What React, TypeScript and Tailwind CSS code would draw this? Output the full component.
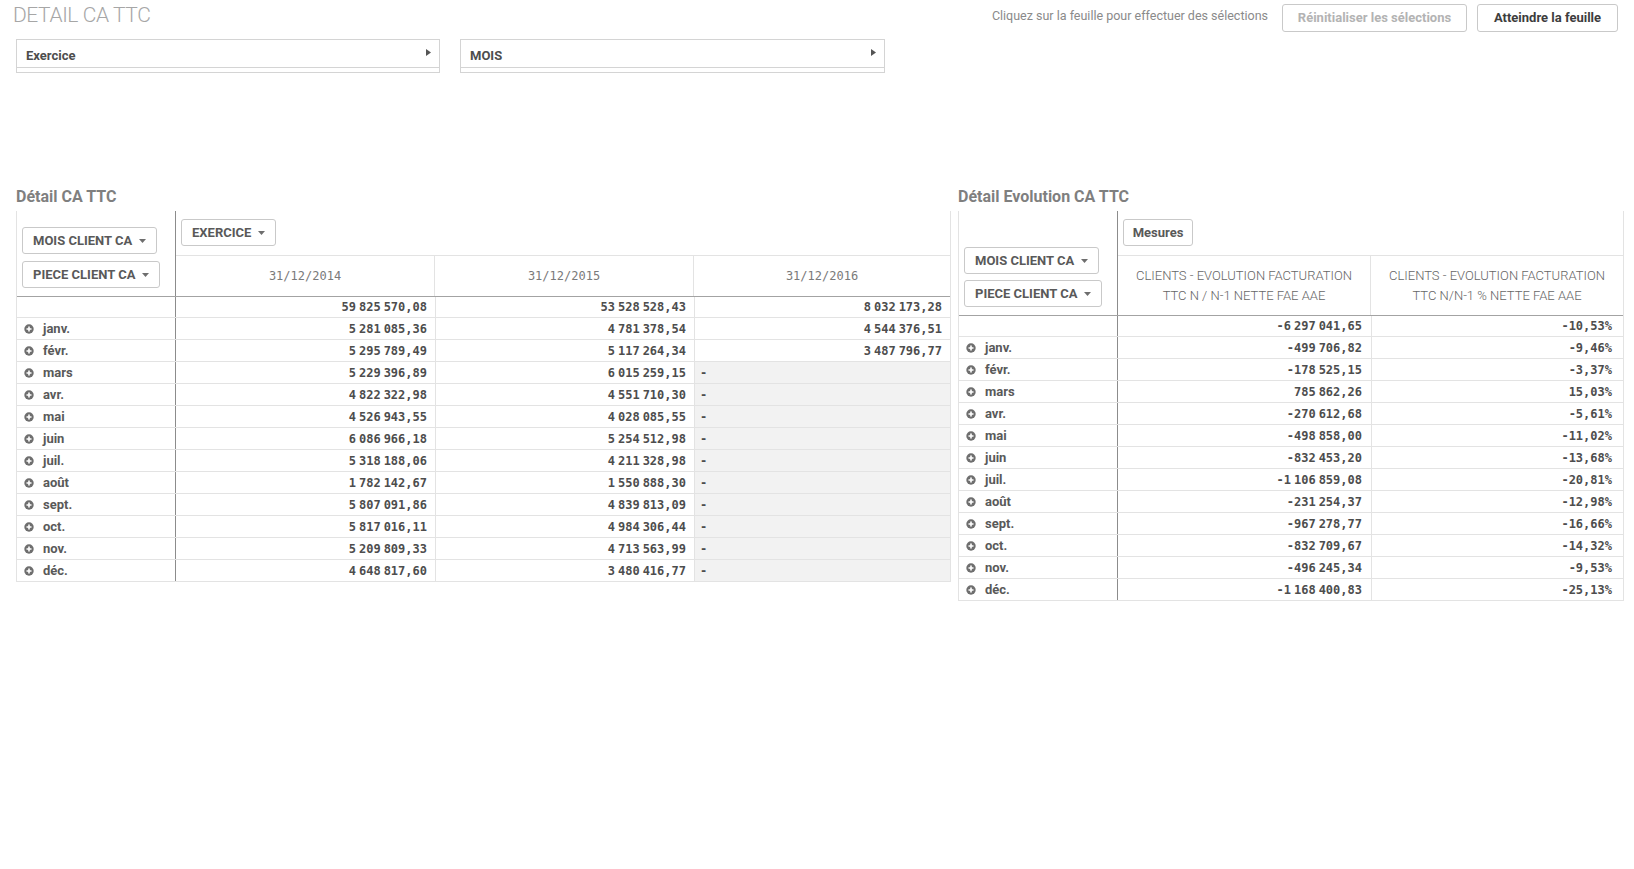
import React from "react";

const sans = "font-['Roboto','Liberation_Sans',sans-serif]";
const mono = "font-['DejaVu_Sans_Mono','Liberation_Mono',monospace]";

const months = ["janv.", "févr.", "mars", "avr.", "mai", "juin", "juil.", "août", "sept.", "oct.", "nov.", "déc."];

const caRows: [string, string, string | null][] = [
  ["5 281 085,36", "4 781 378,54", "4 544 376,51"],
  ["5 295 789,49", "5 117 264,34", "3 487 796,77"],
  ["5 229 396,89", "6 015 259,15", null],
  ["4 822 322,98", "4 551 710,30", null],
  ["4 526 943,55", "4 028 085,55", null],
  ["6 086 966,18", "5 254 512,98", null],
  ["5 318 188,06", "4 211 328,98", null],
  ["1 782 142,67", "1 550 888,30", null],
  ["5 807 091,86", "4 839 813,09", null],
  ["5 817 016,11", "4 984 306,44", null],
  ["5 209 809,33", "4 713 563,99", null],
  ["4 648 817,60", "3 480 416,77", null],
];

const evoRows: [string, string][] = [
  ["-499 706,82", "-9,46%"],
  ["-178 525,15", "-3,37%"],
  ["785 862,26", "15,03%"],
  ["-270 612,68", "-5,61%"],
  ["-498 858,00", "-11,02%"],
  ["-832 453,20", "-13,68%"],
  ["-1 106 859,08", "-20,81%"],
  ["-231 254,37", "-12,98%"],
  ["-967 278,77", "-16,66%"],
  ["-832 709,67", "-14,32%"],
  ["-496 245,34", "-9,53%"],
  ["-1 168 400,83", "-25,13%"],
];

// numbers use a narrow group separator, like the Qlik number format
function Num({ v }: { v: string }) {
  const parts = v.split(" ");
  return (
    <span className="whitespace-nowrap">
      {parts.map((p, i) => (
        <React.Fragment key={i}>
          {i > 0 && <span className="inline-block w-[3px]" />}
          {p}
        </React.Fragment>
      ))}
    </span>
  );
}

function PlusIcon() {
  return (
    <svg width="10" height="10" viewBox="0 0 10 10" className="shrink-0">
      <circle cx="5" cy="5" r="4.7" fill="#6e6e6e" />
      <path d="M5 2.5v5M2.5 5h5" stroke="#fff" strokeWidth="1.6" />
    </svg>
  );
}

function Caret() {
  return (
    <svg width="7" height="4" viewBox="0 0 7 4" className="ml-[7px]">
      <path d="M0 0h7L3.5 4z" fill="#6e6e6e" />
    </svg>
  );
}

function DimButton({ label }: { label: string }) {
  return (
    <div className="h-[27px] w-fit inline-flex items-center px-[10px] border border-[#c9c9c9] rounded-[3px] bg-white text-[13px] font-bold text-[#595959]">
      {label}
      <Caret />
    </div>
  );
}

function FilterBox({ label, w }: { label: string; w: string }) {
  return (
    <div className={`${w} h-[34px] border border-[#d4d4d4] flex flex-col`}>
      <div className="h-[28px] border-b border-[#d4d4d4] flex items-center justify-between pl-[9px] pr-[8px] pt-[4px]">
        <span className="text-[13px] font-bold text-[#4d4d4d]">{label}</span>
        <svg width="5" height="7" viewBox="0 0 5 7" className="-mt-[7px]">
          <path d="M0 0l5 3.5L0 7z" fill="#555" />
        </svg>
      </div>
    </div>
  );
}

function RowLabel({ name }: { name: string }) {
  return (
    <div className="flex items-center pl-[7px] gap-[9px] border-r border-[#8c8c8c] h-full">
      <PlusIcon />
      <span className="text-[13px] font-bold text-[#595959]">{name}</span>
    </div>
  );
}

const numCell = `flex items-center justify-end ${mono} text-[12px] font-bold text-[#4d4d4d]`;

function CaTable() {
  return (
    <div className="w-[935px] border-x border-[#e3e3e3]">
      {/* header */}
      <div className="flex h-[86px] border-b border-[#a3a3a3]">
        <div className="w-[159px] border-r border-[#8c8c8c] flex flex-col justify-end items-start gap-[7px] pl-[5px] pb-[8px]">
          <DimButton label="MOIS CLIENT CA" />
          <DimButton label="PIECE CLIENT CA" />
        </div>
        <div className="flex-1 flex flex-col">
          <div className="h-[44px] pt-[8px] pl-[5px]">
            <DimButton label="EXERCICE" />
          </div>
          <div className="flex-1 grid grid-cols-[259px_259px_1fr] border-t border-[#e3e3e3]">
            {["31/12/2014", "31/12/2015", "31/12/2016"].map((d, i) => (
              <div
                key={d}
                className={`flex items-center justify-center ${mono} text-[12px] text-[#7a7a7a] ${i < 2 ? "border-r border-[#e3e3e3]" : ""}`}
              >
                {d}
              </div>
            ))}
          </div>
        </div>
      </div>
      {/* totals */}
      <div className="grid grid-cols-[159px_260px_259px_1fr] h-[21px] border-b border-[#e3e3e3]">
        <div className="border-r border-[#8c8c8c]" />
        <div className={`${numCell} pr-[8px] border-r border-[#e3e3e3]`}><Num v="59 825 570,08" /></div>
        <div className={`${numCell} pr-[8px] border-r border-[#e3e3e3]`}><Num v="53 528 528,43" /></div>
        <div className={`${numCell} pr-[8px]`}><Num v="8 032 173,28" /></div>
      </div>
      {caRows.map((r, i) => (
        <div key={i} className="grid grid-cols-[159px_260px_259px_1fr] h-[22px] border-b border-[#e3e3e3]">
          <RowLabel name={months[i]} />
          <div className={`${numCell} pr-[8px] border-r border-[#e3e3e3]`}><Num v={r[0]} /></div>
          <div className={`${numCell} pr-[8px] border-r border-[#e3e3e3]`}><Num v={r[1]} /></div>
          {r[2] ? (
            <div className={`${numCell} pr-[8px]`}><Num v={r[2]} /></div>
          ) : (
            <div className={`flex items-center pl-[5px] bg-[#f2f2f2] ${mono} text-[12px] font-bold text-[#4d4d4d]`}>-</div>
          )}
        </div>
      ))}
    </div>
  );
}

function EvoTable() {
  return (
    <div className="w-[666px] border-x border-[#e3e3e3]">
      <div className="flex h-[105px] border-b border-[#a3a3a3]">
        <div className="w-[159px] border-r border-[#8c8c8c] flex flex-col justify-end items-start gap-[6px] pl-[5px] pb-[8px]">
          <DimButton label="MOIS CLIENT CA" />
          <DimButton label="PIECE CLIENT CA" />
        </div>
        <div className="flex-1 flex flex-col">
          <div className="h-[44px] pt-[8px] pl-[5px]">
            <div className="h-[27px] w-[70px] flex items-center justify-center border border-[#c9c9c9] rounded-[3px] text-[13px] font-bold text-[#595959]">
              Mesures
            </div>
          </div>
          <div className="flex-1 grid grid-cols-[253px_1fr] border-t border-[#e3e3e3]">
            <div className="flex items-center justify-center text-center border-r border-[#e3e3e3] text-[13px] font-light leading-[20px] text-[#666]">
              CLIENTS - EVOLUTION FACTURATION<br />TTC N / N-1 NETTE FAE AAE
            </div>
            <div className="flex items-center justify-center text-center text-[13px] font-light leading-[20px] text-[#666]">
              CLIENTS - EVOLUTION FACTURATION<br />TTC N/N-1 % NETTE FAE AAE
            </div>
          </div>
        </div>
      </div>
      <div className="grid grid-cols-[159px_254px_1fr] h-[21px] border-b border-[#e3e3e3]">
        <div className="border-r border-[#8c8c8c]" />
        <div className={`${numCell} pr-[9px] border-r border-[#e3e3e3]`}><Num v="-6 297 041,65" /></div>
        <div className={`${numCell} pr-[11px]`}>-10,53%</div>
      </div>
      {evoRows.map((r, i) => (
        <div key={i} className="grid grid-cols-[159px_254px_1fr] h-[22px] border-b border-[#e3e3e3]">
          <RowLabel name={months[i]} />
          <div className={`${numCell} pr-[9px] border-r border-[#e3e3e3]`}><Num v={r[0]} /></div>
          <div className={`${numCell} pr-[11px]`}>{r[1]}</div>
        </div>
      ))}
    </div>
  );
}

export default function App() {
  return (
    <div className={`w-[1634px] h-[869px] bg-white overflow-hidden ${sans}`}>
      {/* top bar */}
      <div className="flex items-start justify-between pl-[13px] pr-[16px] pt-[4px] h-[35px]">
        <h1 className="text-[21px] font-light text-[#a6a6a6] leading-[22px] tracking-[-0.4px]">DETAIL CA TTC</h1>
        <div className="flex items-center">
          <span className="text-[12.5px] text-[#8a8a8a] mr-[14px] -mt-[3px]">Cliquez sur la feuille pour effectuer des sélections</span>
          <div className="h-[28px] w-[185px] flex items-center justify-center border border-[#c9c9c9] rounded-[3px] text-[13px] font-bold text-[#b3b3b3]">
            Réinitialiser les sélections
          </div>
          <div className="h-[28px] w-[141px] ml-[10px] flex items-center justify-center border border-[#c9c9c9] rounded-[3px] text-[13px] font-bold text-[#3d3d3d]">
            Atteindre la feuille
          </div>
        </div>
      </div>

      {/* filters */}
      <div className="flex gap-[20px] pl-[16px] mt-[4px]">
        <FilterBox label="Exercice" w="w-[424px]" />
        <FilterBox label="MOIS" w="w-[425px]" />
      </div>

      {/* tables */}
      <div className="flex gap-[7px] pl-[16px] mt-[114px]">
        <div className="flex flex-col">
          <h2 className="h-[24px] text-[16px] font-bold text-[#7f7f7f] leading-[20px]">Détail CA TTC</h2>
          <CaTable />
        </div>
        <div className="flex flex-col">
          <h2 className="h-[24px] text-[16px] font-bold text-[#7f7f7f] leading-[20px]">Détail Evolution CA TTC</h2>
          <EvoTable />
        </div>
      </div>
    </div>
  );
}
